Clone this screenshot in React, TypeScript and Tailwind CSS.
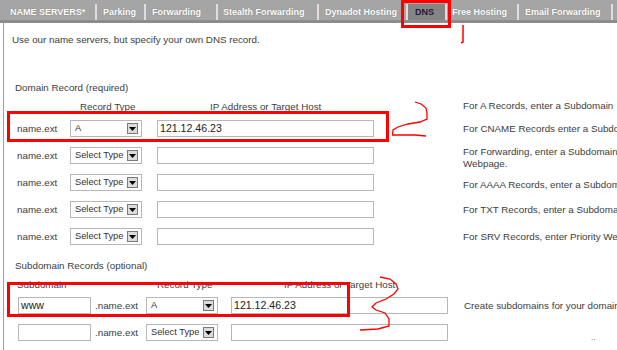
import React from "react";

const tabs = [
  { label: "NAME SERVERS*", w: 97, pl: 10 },
  { label: "Parking", w: 49, pl: 6 },
  { label: "Forwarding", w: 72, pl: 6 },
  { label: "Stealth Forwarding", w: 101, pl: 5 },
  { label: "Dynadot Hosting", w: 89, pl: 6 },
  { label: "DNS", w: 39, pl: 7, active: true },
  { label: "Free Hosting", w: 72, pl: 5 },
  { label: "Email Forwarding", w: 94, pl: 6 },
];

function Select({ value }: { value: string }) {
  return (
    <div className="w-[72px] h-[17px] border border-[#b7b7b7] bg-white flex items-center justify-between pl-[4px] pr-[3px] shrink-0">
      <span className="text-[9.3px] text-[#333] leading-none whitespace-nowrap">{value}</span>
      <div className="w-[11px] h-[11px] bg-[#dcdcdc] border border-[#7a7a7a] flex items-center justify-center shrink-0">
        <svg width="7" height="4" viewBox="0 0 7 4">
          <path d="M0 0 L7 0 L3.5 4 Z" fill="#000" />
        </svg>
      </div>
    </div>
  );
}

function Input({ w, value }: { w: string; value?: string }) {
  return (
    <div className={`${w} h-[17px] border border-[#b7b7b7] bg-white flex items-center pl-[2px] shrink-0`}>
      <span className="text-[10.6px] text-[#222] leading-none">{value}</span>
    </div>
  );
}

const domainHelp: (string | string[])[] = [
  "For CNAME Records enter a Subdomain",
  ["For Forwarding, enter a Subdomain", "Webpage."],
  "For AAAA Records, enter a Subdomain",
  "For TXT Records, enter a Subdomain",
  "For SRV Records, enter Priority Weight",
];

export default function App() {
  return (
    <div className="relative w-[617px] h-[350px] overflow-hidden bg-white font-['Liberation_Sans',Arial,sans-serif] text-[#3d3d3d] text-[9.8px] leading-[12px]">
      {/* Tab bar */}
      <div className="h-[23px] bg-[#a5a5a5] border-b-[3px] border-[#8c8c8c] flex items-start">
        {tabs.map((t) => (
          <div
            key={t.label}
            style={{ width: t.w, paddingLeft: t.pl }}
            className={`mt-[4px] h-[16px] shrink-0 flex items-center border-r-2 border-[#dedede] font-bold text-[9px] whitespace-nowrap ${
              t.active
                ? "bg-[#858585] text-[#1c1c3c]"
                : "text-white [text-shadow:0_0_1px_#6e6e6e]"
            }`}
          >
            {t.label}
          </div>
        ))}
      </div>

      {/* Content */}
      <div className="ml-[3px] border-l border-[#a0a0a0] h-[327px] flex flex-col">
        <div className="mt-[11px] pl-[8px]">Use our name servers, but specify your own DNS record.</div>

        <div className="mt-[36px] pl-[11px]">Domain Record (required)</div>

        {/* header row */}
        <div className="mt-[5px] h-[16px] flex items-center whitespace-nowrap">
          <div className="w-[459px] shrink-0 flex items-center pl-[76px]">
            <span className="w-[130px] shrink-0">Record Type</span>
            <span>IP Address or Target Host</span>
          </div>
          <span className="-mt-[3px]">For A Records, enter a Subdomain</span>
        </div>

        {/* rows */}
        {[0, 1, 2, 3, 4].map((i) => {
          const help = domainHelp[i];
          return (
            <div key={i} className={`h-[27px] flex whitespace-nowrap ${i === 1 ? "items-start" : "items-center"}`}>
              <div className={`w-[459px] shrink-0 flex items-center pl-[13px] ${i === 1 ? "h-[27px]" : ""}`}>
                <span className="w-[53px] shrink-0">name.ext</span>
                <Select value={i === 0 ? "A" : "Select Type"} />
                <div className="w-[15px] shrink-0" />
                <Input w="w-[217px]" value={i === 0 ? "121.12.46.23" : ""} />
              </div>
              {Array.isArray(help) ? (
                <div className="pt-[4px] flex flex-col">
                  <span>{help[0]}</span>
                  <span>{help[1]}</span>
                </div>
              ) : (
                <span className={i === 2 ? "mt-[4px]" : ""}>{help}</span>
              )}
            </div>
          );
        })}

        <div className="mt-[10px] pl-[11px]">Subdomain Records (optional)</div>

        <div className="mt-[5px] h-[15px] flex items-center whitespace-nowrap">
          <div className="flex items-center pl-[13px]">
            <span className="w-[140px] shrink-0">Subdomain</span>
            <span className="w-[127px] shrink-0">Record Type</span>
            <span>IP Address or Target Host</span>
          </div>
        </div>

        {[0, 1].map((i) => (
          <div key={i} className="h-[27px] flex items-center whitespace-nowrap">
            <div className="w-[460px] shrink-0 flex items-center pl-[14px]">
              <Input w="w-[73px]" value={i === 0 ? "www" : ""} />
              <span className="ml-[4px] w-[51px] shrink-0">.name.ext</span>
              <Select value={i === 0 ? "A" : "Select Type"} />
              <div className="w-[13px] shrink-0" />
              <Input w="w-[217px]" value={i === 0 ? "121.12.46.23" : ""} />
            </div>
            {i === 0 ? (
              <span>Create subdomains for your domain</span>
            ) : (
              <span className="ml-[127px] mt-[10px] text-[8px] text-[#555]">..</span>
            )}
          </div>
        ))}
      </div>

      {/* Annotations */}
      <div className="absolute left-[401px] top-0 w-[50px] h-[28px] border-[3px] border-[#ff0000]" />
      <div className="absolute left-[7px] top-[111px] w-[382px] h-[31px] border-[3px] border-[#ff0000]" />
      <div className="absolute left-[7px] top-[282px] w-[343px] h-[35px] border-[3px] border-[#ff0000]" />
      <svg className="absolute inset-0 pointer-events-none" width="617" height="350" viewBox="0 0 617 350">
        <path d="M463 25 L463 42 L461 43" stroke="#ff0000" strokeWidth="1.5" fill="none" />
        <path
          d="M415 102 L421 104 L426 108 L427 113 L427 119 L420 122 L408 124 L398 127 L393 130 L392.5 135 L405 135 L415 135 L426 136"
          stroke="#ff0000"
          strokeWidth="1.3"
          fill="none"
        />
        <path
          d="M380 277 L390 279 L396 284 L398 289 L394 294 L386 299 L376 303 L372 307 L376 310 L385 313 L389 319 L389 326 L378 329 L360 330"
          stroke="#ff0000"
          strokeWidth="1.3"
          fill="none"
        />
      </svg>
    </div>
  );
}
